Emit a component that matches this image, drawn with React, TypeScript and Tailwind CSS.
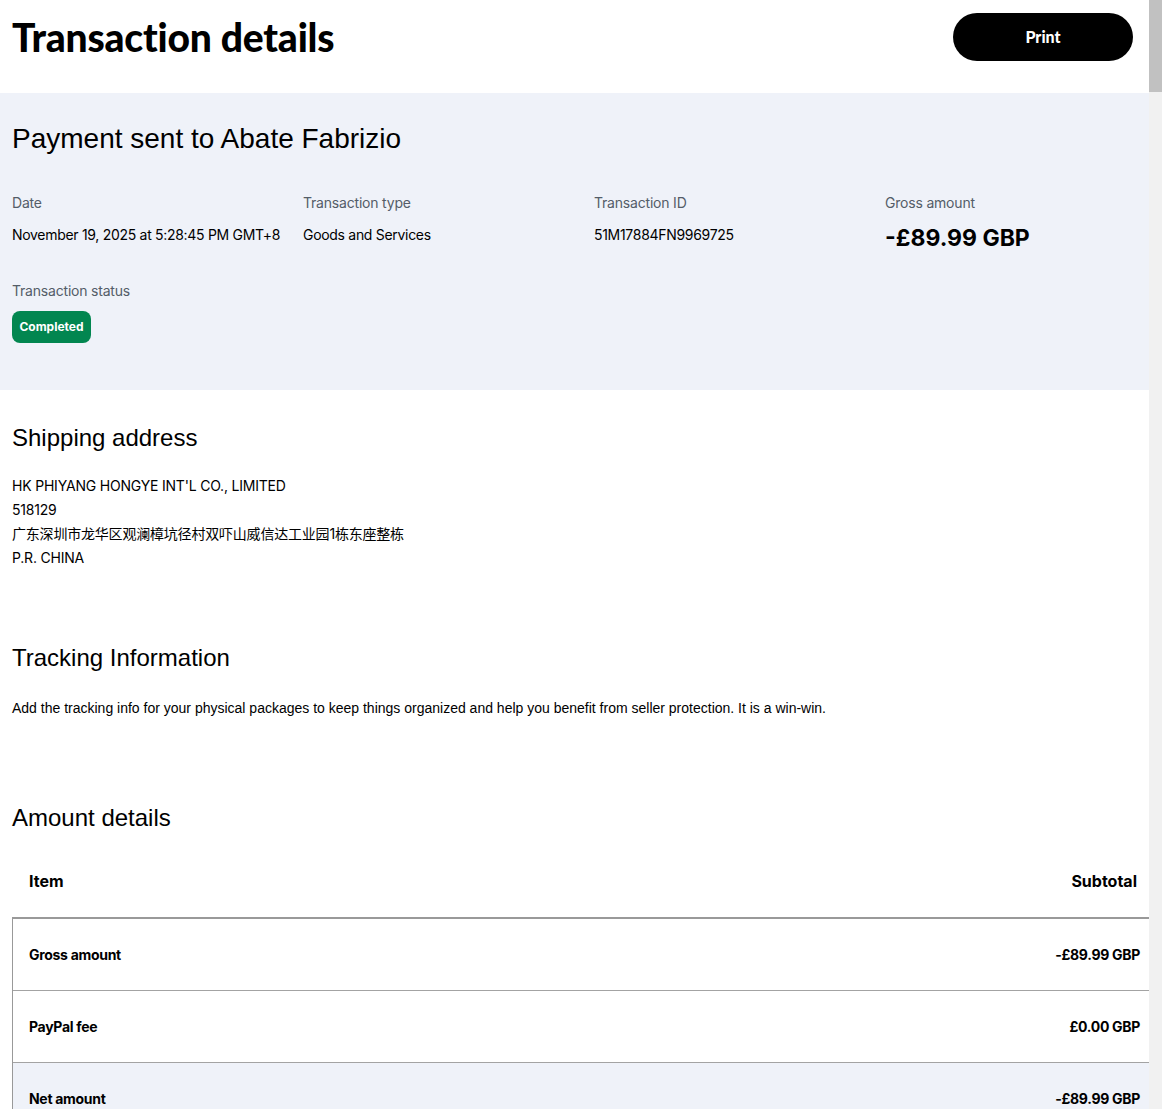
import React from "react";

const SANS = "font-['Inter','Noto_Sans_CJK_SC',sans-serif]";
const ARIAL = "font-['Liberation_Sans','Noto_Sans_CJK_SC',sans-serif]";

const summary = [
  { label: "Date", value: "November 19, 2025 at 5:28:45 PM GMT+8" },
  { label: "Transaction type", value: "Goods and Services" },
  { label: "Transaction ID", value: "51M17884FN9969725" },
];

const amountRows = [
  { item: "Gross amount", subtotal: "-£89.99 GBP", shaded: false },
  { item: "PayPal fee", subtotal: "£0.00 GBP", shaded: false },
  { item: "Net amount", subtotal: "-£89.99 GBP", shaded: true },
];

export default function App() {
  return (
    <div className="flex h-[1109px] overflow-hidden bg-white text-[#001435]">
      <main className="flex-1 min-w-0">
        {/* 上部ヘッダー */}
        <header className="h-[93px] flex items-start justify-between pl-3 pr-4 pt-[13px]">
          <h1 className="font-['Lato',sans-serif] font-black text-[39px] leading-[48px] tracking-[-0.2px] text-black">
            Transaction details
          </h1>
          <button className="w-[180px] h-12 rounded-full bg-black text-white font-['Lato',sans-serif] font-black text-[16px]">
            Print
          </button>
        </header>

        {/* 取引サマリー */}
        <section className="bg-[#eff2f9] pl-3 pt-[28px] pb-[47px]">
          <h2 className={`${ARIAL} text-[28px] leading-[36px] text-black`}>
            Payment sent to Abate Fabrizio
          </h2>
          <div className="grid grid-cols-[291px_291px_291px_1fr] mt-9">
            {summary.map((s) => (
              <div key={s.label}>
                <div className={`${SANS} text-[14px] leading-5 text-[#545d68] tracking-[-0.2px]`}>{s.label}</div>
                <div className={`${SANS} text-[14px] leading-5 mt-3 text-black tracking-[-0.3px]`}>{s.value}</div>
              </div>
            ))}
            <div>
              <div className={`${SANS} text-[14px] leading-5 text-[#545d68] tracking-[-0.2px]`}>Gross amount</div>
              <div className={`${SANS} text-[23px] leading-7 mt-[11px] font-bold text-black`}>-£89.99 GBP</div>
            </div>
          </div>
          <div className={`${SANS} text-[14px] leading-5 text-[#545d68] mt-[29px] tracking-[-0.2px]`}>
            Transaction status
          </div>
          <span
            className={`${SANS} mt-[10px] inline-flex items-center justify-center h-8 w-[79px] rounded-lg bg-[#028650] text-white text-[12px] font-bold`}
          >
            Completed
          </span>
        </section>

        {/* 配送先 */}
        <section className="pl-3 pt-8">
          <h2 className={`${ARIAL} text-[24px] leading-8 text-black`}>Shipping address</h2>
          <div className={`${SANS} mt-5 text-[14px] leading-6 text-black tracking-[-0.2px]`}>
            <div>HK PHIYANG HONGYE INT'L CO., LIMITED</div>
            <div>518129</div>
            <div>广东深圳市龙华区观澜樟坑径村双吓山威信达工业园1栋东座整栋</div>
            <div>P.R. CHINA</div>
          </div>
        </section>

        <section className="pl-3 pt-[72px]">
          <h2 className={`${ARIAL} text-[24px] leading-8 text-black`}>Tracking Information</h2>
          <p className={`${ARIAL} mt-6 text-[14px] leading-5 text-black`}>
            Add the tracking info for your physical packages to keep things organized and help you benefit from seller
            protection. It is a win-win.
          </p>
        </section>

        {/* 金額詳細 */}
        <section className="pl-3 pt-[84px]">
          <h2 className={`${ARIAL} text-[24px] leading-8 text-black`}>Amount details</h2>
          <div className="mt-[11px]">
            <div className={`${SANS} h-[72px] flex items-center justify-between pl-[17px] pr-3 text-[16px] font-bold text-black`}>
              <span>Item</span>
              <span>Subtotal</span>
            </div>
            <div className="border-t-2 border-l border-[#999999]">
              {amountRows.map((r) => (
                <div
                  key={r.item}
                  className={`${SANS} h-[72px] flex items-center justify-between pl-4 pr-[9px] text-[14px] tracking-[-0.3px] font-bold text-black border-b border-[#a3a3a3] ${
                    r.shaded ? "bg-[#eff2f9]" : ""
                  }`}
                >
                  <span>{r.item}</span>
                  <span>{r.subtotal}</span>
                </div>
              ))}
            </div>
          </div>
        </section>
      </main>

      {/* スクロールバー */}
      <div className="w-[13px] shrink-0 bg-[#f1f1f1]">
        <div className="h-[92px] bg-[#c1c1c1]" />
      </div>
    </div>
  );
}
